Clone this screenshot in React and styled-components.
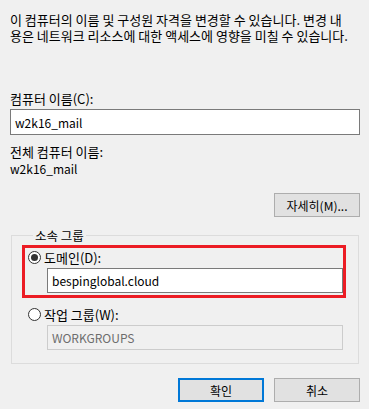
import React from 'react'
import styled, { createGlobalStyle } from 'styled-components'

const Global = createGlobalStyle`
  html, body {
    margin: 0;
    padding: 0;
    background: #f0f0f0;
  }
  body {
    font-family: "Noto Sans CJK KR", "Noto Sans", sans-serif;
    font-size: 13px;
    color: #000;
  }
`

const Dialog = styled.div`
  width: 369px;
  height: 409px;
  box-sizing: border-box;
  background: #f0f0f0;
  padding: 12px 9px 0 10px;
  display: flex;
  flex-direction: column;
`

const Text = styled.div`
  line-height: ${p => p.lh || 15}px;
  font-size: ${p => p.latin ? 12 : 13}px;
  margin-top: ${p => p.top || 0}px;
  white-space: nowrap;
`

const TextBox = styled.div`
  box-sizing: border-box;
  height: ${p => p.h || 25}px;
  margin-top: ${p => p.top || 0}px;
  border: 1px solid ${p => p.disabled ? '#cccccc' : '#7a7a7a'};
  background: ${p => p.disabled ? '#f0f0f0' : '#fff'};
  color: ${p => p.disabled ? '#6d6d6d' : '#000'};
  padding: 0 4px;
  display: flex;
  align-items: center;
  font-size: 12px;
  line-height: 15px;
`

const ButtonRow = styled.div`
  display: flex;
  justify-content: flex-end;
  gap: 10px;
  margin-top: ${p => p.top || 0}px;
`

const Button = styled.div`
  box-sizing: border-box;
  width: 86px;
  height: 24px;
  background: #e1e1e1;
  border: ${p => p.primary ? '2px solid #0078d7' : '1px solid #adadad'};
  display: flex;
  align-items: center;
  justify-content: center;
  font-size: 12px;
  line-height: 15px;
`

const Group = styled.fieldset`
  margin: 11px 1px 0 1px;
  padding: 7px 15px 13px 16px;
  border: 1px solid #dcdcdc;
  min-width: 0;
`

const Legend = styled.legend`
  padding: 0 2px;
  margin-left: 5px;
  font-size: 12.5px;
  line-height: 15px;
`

const Option = styled.div`
  position: relative;
  margin-top: ${p => p.top || 0}px;
`

const RadioRow = styled.div`
  display: flex;
  align-items: center;
  gap: 3px;
  line-height: 15px;
`

const Radio = styled.span`
  box-sizing: border-box;
  width: 13px;
  height: 13px;
  border-radius: 50%;
  border: 1px solid #333;
  background: #fff;
  display: flex;
  align-items: center;
  justify-content: center;
  &::after {
    content: '';
    width: 7px;
    height: 7px;
    border-radius: 50%;
    background: ${p => p.checked ? '#333' : 'transparent'};
  }
`

const Indented = styled.div`
  margin-left: 19px;
`

const Highlight = styled.div`
  position: absolute;
  left: -6px;
  top: -5px;
  right: -3px;
  bottom: -5px;
  border: 3px solid #ec1c24;
  pointer-events: none;
`

export default function App() {
  return (
    <>
      <Global />
      <Dialog>
        <Text lh={16}>
          이 컴퓨터의 이름 및 구성원 자격을 변경할 수 있습니다. 변경 내<br />
          용은 네트워크 리소스에 대한 액세스에 영향을 미칠 수 있습니다.
        </Text>

        <Text top={47}>컴퓨터 이름(C):</Text>
        <TextBox top={3} h={26}>w2k16_mail</TextBox>

        <Text top={9}>전체 컴퓨터 이름:</Text>
        <Text top={2} latin>w2k16_mail</Text>

        <ButtonRow top={17}>
          <Button>자세히(M)...</Button>
        </ButtonRow>

        <Group>
          <Legend>소속 그룹</Legend>

          <Option>
            <RadioRow>
              <Radio checked />
              <span>도메인(D):</span>
            </RadioRow>
            <Indented>
              <TextBox top={3}>bespinglobal.cloud</TextBox>
            </Indented>
            <Highlight />
          </Option>

          <Option top={14}>
            <RadioRow>
              <Radio />
              <span>작업 그룹(W):</span>
            </RadioRow>
            <Indented>
              <TextBox top={3} disabled>WORKGROUPS</TextBox>
            </Indented>
          </Option>
        </Group>

        <ButtonRow top={14}>
          <Button primary>확인</Button>
          <Button>취소</Button>
        </ButtonRow>
      </Dialog>
    </>
  )
}
